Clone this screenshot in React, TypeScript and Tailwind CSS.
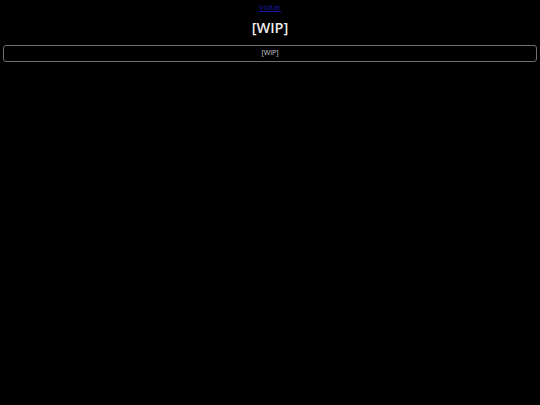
import React from 'react';

export default function App() {
  return (
    <div className="min-h-screen bg-black text-[#ececec] font-['Open_Sans',sans-serif] px-[3px]">
      <div className="flex justify-center pt-[2px]">
        <a href="#" className="text-[8px] leading-[10px] text-[#1a1aa6] underline">
          Voltar
        </a>
      </div>
      <h1 className="mt-[6px] text-center text-[14.5px] font-semibold leading-[20px]">[WIP]</h1>
      <div className="mt-[7px] flex h-[17px] items-center justify-center rounded-[3px] border border-[#6e6e6e] text-[7px] text-[#cfcfcf]">
        [WIP]
      </div>
    </div>
  );
}
